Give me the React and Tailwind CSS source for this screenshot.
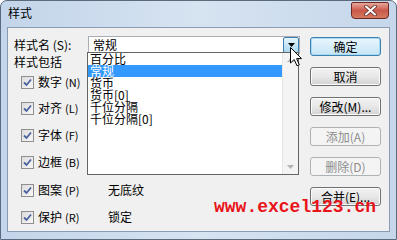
import React from 'react'

const FONT = { fontFamily: '"Noto Sans CJK SC", "Liberation Sans", sans-serif' }

const ITEMS = ['百分比', '常规', '货币', '货币[0]', '千位分隔', '千位分隔[0]']

function CheckBox() {
  return (
    <div className="w-[13px] h-[13px] border border-[#8f8f8f] bg-gradient-to-br from-[#dcdcdc] to-[#f7f7f7] flex items-center justify-center">
      <svg width="9" height="9" viewBox="0 0 9 9">
        <path d="M1 4.5 L3.5 7 L8 1.5" fill="none" stroke="#4b62a0" strokeWidth="1.8" />
      </svg>
    </div>
  )
}

function Row({ label, keyName, value, className }) {
  return (
    <div className={`h-[14px] flex items-center ${className}`}>
      <div className="ml-[7px]"><CheckBox /></div>
      <span className="ml-[4px] w-[70px] flex items-center text-[12px] leading-none text-black">
        {label}
        <span className="ml-[3px] text-[11px]">({keyName})</span>
      </span>
      {value && <span className="text-[12px] leading-none text-black">{value}</span>}
    </div>
  )
}

function Btn({ children, primary, disabled }) {
  const base = 'h-[19px] w-[71px] rounded-[3px] flex items-center justify-center text-[12px] leading-none '
  if (disabled) {
    return <div className={base + 'border border-[#adb2b5] bg-[#f4f4f4] text-[#8d8d8d]'}>{children}</div>
  }
  return (
    <div
      className={
        base +
        (primary
          ? 'border border-[#3c7fb1] bg-gradient-to-b from-[#eaf6fd] to-[#c4e5f6] shadow-[inset_0_0_0_1px_#a7d9f5]'
          : 'border border-[#707070] bg-gradient-to-b from-[#f2f2f2] via-[#e8e8e8] to-[#d2d2d2] shadow-[inset_0_0_0_1px_#fcfcfc]') +
        ' text-black'
      }
    >
      {children}
    </div>
  )
}

export default function App() {
  return (
    <div className="w-[397px] h-[240px] relative overflow-hidden bg-white" style={FONT}>
      <div className="h-full rounded-t-[7px] border border-[#5b6b7d] bg-gradient-to-r from-[#c3d5ea] via-[#d6e3f1] to-[#c6d7eb] flex flex-col px-[6px] pb-[7px]">
        {/* title bar */}
        <div className="h-[26px] flex items-start justify-between">
          <span className="pl-[1px] pt-[6px] text-[12px] leading-none text-black">样式</span>
          <div className="mt-[1px] mr-[1px] w-[38px] h-[17px] rounded-b-[4px] rounded-t-[2px] border border-[#6d2a24] bg-gradient-to-b from-[#e7a89b] via-[#c9584a] to-[#d47a5e] flex items-center justify-center">
            <svg width="13" height="11" viewBox="0 0 13 11">
              <path d="M2 1.5 L11 9.5 M11 1.5 L2 9.5" stroke="#5a2a26" strokeWidth="3.6" strokeLinecap="round" />
              <path d="M2 1.5 L11 9.5 M11 1.5 L2 9.5" stroke="#ffffff" strokeWidth="2" strokeLinecap="round" />
            </svg>
          </div>
        </div>

        {/* client area */}
        <div className="flex-1 border border-[#8a9cb3] bg-[#f0f0f0] relative flex">
          <div className="flex-1 flex flex-col pt-[8px] pl-[6px]">
            <div className="h-[18px] flex items-center">
              <span className="w-[74px] text-[12px] leading-none text-black">样式名 (S):</span>
              <div className="w-[212px] h-[18px] border border-[#abadb3] bg-white flex items-center justify-between">
                <span className="pl-[4px] text-[12px] leading-none text-black">常规</span>
                <div className="w-[16px] h-[16px] border border-[#3c7fb1] rounded-[2px] bg-gradient-to-b from-[#e5f4fc] to-[#a9d8f2] flex items-center justify-center">
                  <svg width="7" height="4" viewBox="0 0 7 4"><path d="M0 0 H7 L3.5 4 Z" fill="#000" /></svg>
                </div>
              </div>
            </div>
            <div className="h-[12px] mt-[2px] flex items-center text-[12px] leading-none text-black">样式包括</div>
            <Row label="数字" keyName="N" className="mt-[7px]" />
            <Row label="对齐" keyName="L" className="mt-[12px]" />
            <Row label="字体" keyName="F" className="mt-[13px]" />
            <Row label="边框" keyName="B" className="mt-[13px]" />
            <Row label="图案" keyName="P" value="无底纹" className="mt-[14px]" />
            <Row label="保护" keyName="R" value="锁定" className="mt-[13px]" />
          </div>

          <div className="w-[71px] mr-[8px] pt-[9px] flex flex-col gap-[11px]">
            <Btn primary>确定</Btn>
            <Btn>取消</Btn>
            <Btn>修改(M)...</Btn>
            <Btn disabled>添加(A)</Btn>
            <Btn disabled>删除(D)</Btn>
            <Btn>合并(E)...</Btn>
          </div>

          {/* dropdown list */}
          <div className="absolute left-[79px] top-[24px] w-[212px] h-[123px] border border-[#646464] bg-white flex">
            <div className="flex-1 flex flex-col">
              {ITEMS.map((t, i) => (
                <div
                  key={t}
                  className={
                    'h-[12px] pl-[2px] flex items-center text-[12px] leading-none ' +
                    (i === 1 ? 'bg-[#3399ff] text-white' : 'text-black')
                  }
                >
                  {t}
                </div>
              ))}
            </div>
            <div className="w-[16px] bg-[#f4f4f4] border-l border-[#e6e6e6] flex flex-col justify-between items-center py-[5px]">
              <svg width="7" height="4" viewBox="0 0 7 4"><path d="M0 4 H7 L3.5 0 Z" fill="#b4b4b4" /></svg>
              <svg width="7" height="4" viewBox="0 0 7 4"><path d="M0 0 H7 L3.5 4 Z" fill="#b4b4b4" /></svg>
            </div>
          </div>
        </div>
      </div>

      {/* watermark */}
      <div
        className="absolute left-[214px] top-[198px] text-[18px] leading-none font-bold text-[#e8141a]"
        style={{ fontFamily: '"Liberation Mono", monospace' }}
      >
        www.excel123.cn
      </div>

      {/* mouse cursor */}
      <svg className="absolute left-[290px] top-[47px]" width="13" height="20" viewBox="0 0 13 20">
        <path d="M0.5 0.5 L0.5 16 L4.2 12.5 L7 18.8 L9.3 17.8 L6.6 11.6 L11.5 11.6 Z" fill="#fff" stroke="#000" strokeWidth="1" />
      </svg>
    </div>
  )
}
